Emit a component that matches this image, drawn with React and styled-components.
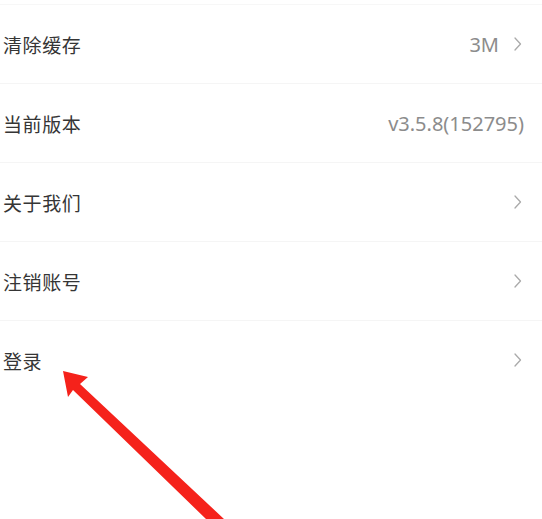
import React from "react";
import styled, { createGlobalStyle } from "styled-components";

const Global = createGlobalStyle`
  html, body { margin: 0; padding: 0; background: #ffffff; }
  body { font-family: "Noto Sans CJK SC", "Noto Sans", sans-serif; }
`;

const Page = styled.div`
  position: relative;
  width: 542px;
  height: 519px;
  overflow: hidden;
  background: #fff;
`;

const List = styled.div`
  margin-top: 4px;
  border-top: 1px solid #f7f7f7;
  display: flex;
  flex-direction: column;
`;

const Row = styled.div`
  height: 78px;
  display: flex;
  align-items: center;
  justify-content: space-between;
  padding: 0 20px 0 3px;
  border-bottom: 1px solid ${(p) => (p.$last ? "transparent" : "#f5f5f5")};
`;

const Label = styled.span`
  font-size: 19px;
  color: #353535;
  letter-spacing: 0.6px;
`;

const Right = styled.div`
  display: flex;
  align-items: center;
  gap: 14px;
`;

const Value = styled.span`
  font-family: "Noto Sans", "Noto Sans CJK SC", sans-serif;
  font-size: 20px;
  color: #8c8c8c;
  margin-right: ${(p) => (p.$noChevron ? "-2px" : "0")};
`;

const Chevron = () => (
  <svg width="9" height="16" viewBox="0 0 9 16" fill="none">
    <polyline points="2,2 7.5,8 2,14" stroke="#aaaaaa" strokeWidth="1.3" strokeLinecap="round" strokeLinejoin="round" />
  </svg>
);

const Arrow = styled.svg`
  position: absolute;
  left: 0;
  top: 0;
  pointer-events: none;
`;

const rows = [
  { label: "清除缓存", value: "3M", chevron: true },
  { label: "当前版本", value: "v3.5.8(152795)", chevron: false },
  { label: "关于我们", chevron: true },
  { label: "注销账号", chevron: true },
  { label: "登录", chevron: true },
];

export default function App() {
  return (
    <Page>
      <Global />
      <List>
        {rows.map((r, i) => (
          <Row key={r.label} $last={i === rows.length - 1}>
            <Label>{r.label}</Label>
            <Right>
              {r.value && <Value $noChevron={!r.chevron}>{r.value}</Value>}
              {r.chevron && <Chevron />}
            </Right>
          </Row>
        ))}
      </List>
      <Arrow width="542" height="519" viewBox="0 0 542 519">
        <polygon
          points="63,371 88,377 80,384 224,519 206,519 73,390 68,397"
          fill="#f5221b"
        />
      </Arrow>
    </Page>
  );
}
